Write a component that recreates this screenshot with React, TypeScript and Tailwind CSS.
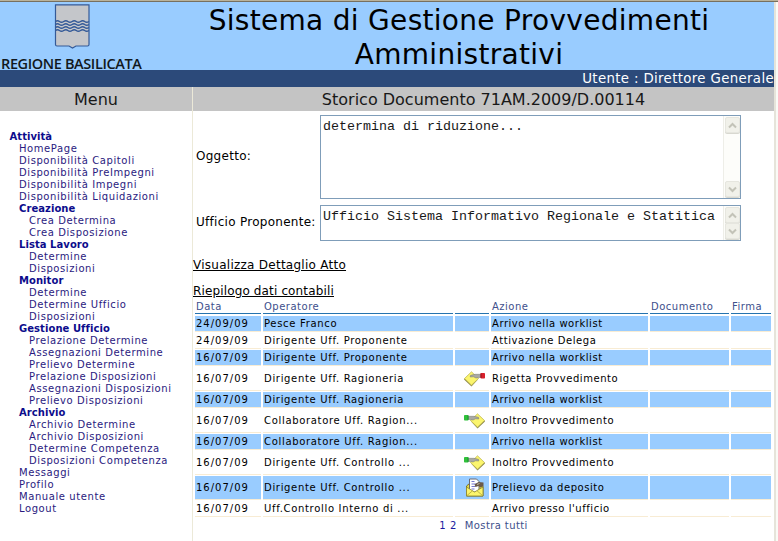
type MenuItem = { label: string; level: 0 | 1 | 2; bold?: boolean };

const menu: MenuItem[] = [
  { label: "Attività", level: 0, bold: true },
  { label: "HomePage", level: 1 },
  { label: "Disponibilità Capitoli", level: 1 },
  { label: "Disponibilità PreImpegni", level: 1 },
  { label: "Disponibilità Impegni", level: 1 },
  { label: "Disponibilità Liquidazioni", level: 1 },
  { label: "Creazione", level: 1, bold: true },
  { label: "Crea Determina", level: 2 },
  { label: "Crea Disposizione", level: 2 },
  { label: "Lista Lavoro", level: 1, bold: true },
  { label: "Determine", level: 2 },
  { label: "Disposizioni", level: 2 },
  { label: "Monitor", level: 1, bold: true },
  { label: "Determine", level: 2 },
  { label: "Determine Ufficio", level: 2 },
  { label: "Disposizioni", level: 2 },
  { label: "Gestione Ufficio", level: 1, bold: true },
  { label: "Prelazione Determine", level: 2 },
  { label: "Assegnazioni Determine", level: 2 },
  { label: "Prelievo Determine", level: 2 },
  { label: "Prelazione Disposizioni", level: 2 },
  { label: "Assegnazioni Disposizioni", level: 2 },
  { label: "Prelievo Disposizioni", level: 2 },
  { label: "Archivio", level: 1, bold: true },
  { label: "Archivio Determine", level: 2 },
  { label: "Archivio Disposizioni", level: 2 },
  { label: "Determine Competenza", level: 2 },
  { label: "Disposizioni Competenza", level: 2 },
  { label: "Messaggi", level: 1 },
  { label: "Profilo", level: 1 },
  { label: "Manuale utente", level: 1 },
  { label: "Logout", level: 1 },
];

const indent = ["pl-[9.5px]", "pl-[19px]", "pl-[29px]"];

type Icon = "reject" | "forward" | "withdraw";
type Row = { date: string; operator: string; action: string; icon?: Icon };

const rows: Row[] = [
  { date: "24/09/09", operator: "Pesce Franco", action: "Arrivo nella worklist" },
  { date: "24/09/09", operator: "Dirigente Uff. Proponente", action: "Attivazione Delega" },
  { date: "16/07/09", operator: "Dirigente Uff. Proponente", action: "Arrivo nella worklist" },
  { date: "16/07/09", operator: "Dirigente Uff. Ragioneria", action: "Rigetta Provvedimento", icon: "reject" },
  { date: "16/07/09", operator: "Dirigente Uff. Ragioneria", action: "Arrivo nella worklist" },
  { date: "16/07/09", operator: "Collaboratore Uff. Ragion...", action: "Inoltro Provvedimento", icon: "forward" },
  { date: "16/07/09", operator: "Collaboratore Uff. Ragion...", action: "Arrivo nella worklist" },
  { date: "16/07/09", operator: "Dirigente Uff. Controllo ...", action: "Inoltro Provvedimento", icon: "forward" },
  { date: "16/07/09", operator: "Dirigente Uff. Controllo ...", action: "Prelievo da deposito", icon: "withdraw" },
  { date: "16/07/09", operator: "Uff.Controllo Interno di ...", action: "Arrivo presso l'ufficio" },
];

const columns = "grid grid-cols-[66px_190px_34px_157px_79px_40px] gap-x-[2px]";

const cellStyle = [
  "pl-px tracking-[1px]",
  "pl-px tracking-[0.68px]",
  "justify-end pr-[4px]",
  "pl-px tracking-[0.55px]",
  "",
  "",
];

function Crest() {
  const waves = [17.5, 20.5, 23.5, 26.5];
  return (
    <svg width="36" height="45" viewBox="0 0 36 45" fill="none">
      <path d="M1.500 .8H35V40.500Q35 42 33.500 42H22L18.500 44L15 42H3Q1.500 42 1.500 40.500Z" fill="#c4c6ca" stroke="#345a98" strokeWidth="1.2" />
      {waves.map((y) => (
        <path
          key={y}
          d={`M1.500 ${y}q2 -1.600 4 0t4.200 0t4.200 0t4.200 0t4.200 0t4.200 0t4.200 0t4.200 0`}
          stroke="#345a98"
          strokeWidth="1.4"
        />
      ))}
    </svg>
  );
}

function HandNote({ cuff, dark }: { cuff: string; dark: string }) {
  return (
    <>
      <path d="M7 8.500L13.500 15.500L21 8.500L20 7L13.500 12Z" fill="#8f8a50" />
      <path d="M6.500 7.500L13.500 .8L20.500 7.500L13.500 14.200Z" fill="#fbf56e" stroke="#b9b048" strokeWidth=".7" />
      <path d="M4.500 3.300H10L14.500 4.300L14.800 6L11.500 5.800L9 7L4.500 6.300Z" fill="#a9a9a2" stroke="#74746c" strokeWidth=".5" />
      <rect x="0" y="2" width="4.500" height="5.500" rx=".8" fill={cuff} />
      <path d="M4 2.500V7" stroke={dark} strokeWidth="1" />
    </>
  );
}

function ActionIcon({ kind }: { kind: Icon }) {
  if (kind === "withdraw") {
    return (
      <svg width="20" height="19" viewBox="0 0 19 19" fill="none">
        <path d="M1 8L4 5.500H15L17.500 8V18H1Z" fill="#e5dc45" stroke="#77702a" />
        <path d="M4 1H11L13.500 3.500V14H4Z" fill="#fff" stroke="#6a6a72" />
        <path d="M6 3.500H9M6 6H11.500M6 8.500H10M6 11H9" stroke="#7777cf" strokeWidth="1.200" />
        <path d="M1 9L9 14L17.500 9V18H1Z" fill="#fcf56b" stroke="#8c842e" strokeWidth=".8" />
        <path d="M1.500 17.500L7 12.800M17 17.500L11.500 12.800" stroke="#a79d35" strokeWidth=".7" />
        <path d="M9 6.500L13 4L18 4.500V8L15 9.500L13 8L10 9Z" fill="#6b5a4a" />
        <path d="M11.500 6.500L14 5.500" stroke="#c5b8a8" />
      </svg>
    );
  }
  if (kind === "reject") {
    return (
      <svg width="21" height="16" viewBox="0 0 21 16" fill="none">
        <g transform="translate(21 0) scale(-1 1)">
          <HandNote cuff="#d8202c" dark="#8e1720" />
        </g>
      </svg>
    );
  }
  return (
    <svg width="21" height="16" viewBox="0 0 21 16" fill="none">
      <HandNote cuff="#2fc13a" dark="#218a35" />
    </svg>
  );
}

function ScrollButton({ up }: { up?: boolean }) {
  return (
    <div className="flex h-4 w-[15px] items-center justify-center rounded-[2px] border border-[#e6e6df] bg-[#f1f1ea] shadow-[0_1px_0_#d8d8d0]">
      <svg width="9" height="7" viewBox="0 0 9 7" fill="none">
        <path d={up ? "M1 5.500L4.500 2L8 5.500" : "M1 1.500L4.500 5L8 1.500"} stroke="#c3c3b8" strokeWidth="2" />
      </svg>
    </div>
  );
}

function TextBox({ text, size }: { text: string; size: string }) {
  return (
    <div className={`flex w-[421px] justify-between border border-[#7f9db9] bg-white tracking-normal ${size}`}>
      <div className="pt-[3px] pl-[2px] font-['Liberation_Mono',monospace] text-[13.33px] leading-[15px] whitespace-pre text-[#181818]">
        {text}
      </div>
      <div className="flex w-[17px] shrink-0 flex-col items-center justify-between border-l border-[#eeeee8] bg-[#fdfdfa] py-px">
        <ScrollButton up />
        <ScrollButton />
      </div>
    </div>
  );
}

export default function App() {
  return (
    <div className="flex h-[541px] w-[778px] flex-col overflow-hidden bg-white font-['DejaVu_Sans',sans-serif] whitespace-nowrap text-black">
      <div className="h-[2px] shrink-0 border-b border-[#77705f] bg-[#b9b29b]" />
      <div className="flex min-h-0 flex-1">
        <div className="flex w-[774px] flex-col">
          <header className="flex h-[68px] bg-[#99ccff]">
            <div className="flex w-[144px] flex-col items-start pt-[2px]">
              <div className="pl-[54px]">
                <Crest />
              </div>
              <div className="mt-[6px] pl-px font-['Open_Sans',sans-serif] text-[14.5px] leading-[17px] font-semibold tracking-[-0.38px] text-[#111820]">
                REGIONE BASILICATA
              </div>
            </div>
            <h1 className="flex-1 pt-[2px] text-center text-[28px] leading-[34px] tracking-[0.3px]">
              Sistema di Gestione Provvedimenti
              <br />
              Amministrativi
            </h1>
          </header>
          <div className="h-[17px] bg-[#2c4a7a] text-right text-[13.33px] leading-[18px] tracking-[0.35px] text-white">
            Utente : Direttore Generale
          </div>
          <div className="flex min-h-0 flex-1">
            <nav className="flex w-[193px] flex-col border-r border-[#ece9d8]">
              <h2 className="h-6 bg-[#c4c4c4] text-center text-base leading-[25px] text-[#181818]">Menu</h2>
              <ul className="pt-[20px] text-[10px] leading-[12px] tracking-[0.58px] text-[#2a1a80]">
                {menu.map((item, i) => (
                  <li
                    key={i}
                    className={`${indent[item.level]} ${item.bold ? "font-bold tracking-[0.06px] text-[#0c0c8c]" : ""}`}
                  >
                    {item.label}
                  </li>
                ))}
              </ul>
            </nav>
            <main className="flex flex-1 flex-col">
              <h2 className="h-6 bg-[#c4c4c4] text-center text-base leading-[25px] text-[#181818]">
                Storico Documento 71AM.2009/D.00114
              </h2>
              <div className="mt-1 flex flex-col gap-[6px] pl-[3px] text-[12px] tracking-[0.28px]">
                <div className="flex items-center">
                  <div className="w-[124px] pb-[3px]">Oggetto:</div>
                  <TextBox text="determina di riduzione..." size="h-[84px]" />
                </div>
                <div className="flex items-center">
                  <div className="w-[124px] pb-[3px]">Ufficio Proponente:</div>
                  <TextBox text="Ufficio Sistema Informativo Regionale e Statitica" size="h-[36px]" />
                </div>
              </div>
              <div className="mt-[16px] flex flex-col items-start gap-[10px] text-[12px] leading-[16px] underline">
                <a className="tracking-[0.26px]">Visualizza Dettaglio Atto</a>
                <a className="tracking-[0.14px]">Riepilogo dati contabili</a>
              </div>
              <div className="ml-[2px] flex flex-col gap-[2px] text-[10px] tracking-[0.5px]">
                <div className={`${columns} h-[15px] leading-[15px] text-[#40508c]`}>
                  {["Data", "Operatore", "", "Azione", "Documento", "Firma"].map((h, i) => (
                    <div key={i} className="h-[15px] border-b border-[#2573ae] pl-px">
                      {h}
                    </div>
                  ))}
                </div>
                {rows.map((row, i) => (
                  <div key={i} className={`${columns} ${row.icon ? "h-[23px] leading-[23px]" : "h-[15px] leading-[15px]"}`}>
                    {[row.date, row.operator, row.icon ? <ActionIcon kind={row.icon} /> : "", row.action, "", ""].map(
                      (cell, c) => (
                        <div
                          key={c}
                          className={`flex items-center border-b border-[#f8ecd4] ${cellStyle[c]} ${
                            i % 2 === 0 ? "bg-[#99ccff]" : ""
                          }`}
                        >
                          {cell}
                        </div>
                      )
                    )}
                  </div>
                ))}
                <div className="flex justify-center pr-[2px] leading-[15px] tracking-[0.4px] text-[#40508c]">
                  <span className="mr-[4px] text-[#1a1aa0]">1</span>
                  <span className="mr-[8px] text-[#1a1aa0]">2</span>
                  <span>Mostra tutti</span>
                </div>
              </div>
            </main>
          </div>
        </div>
        <div className="flex-1 border-l-2 border-[#e6e4da] bg-[#fafaf6]" />
      </div>
    </div>
  );
}
